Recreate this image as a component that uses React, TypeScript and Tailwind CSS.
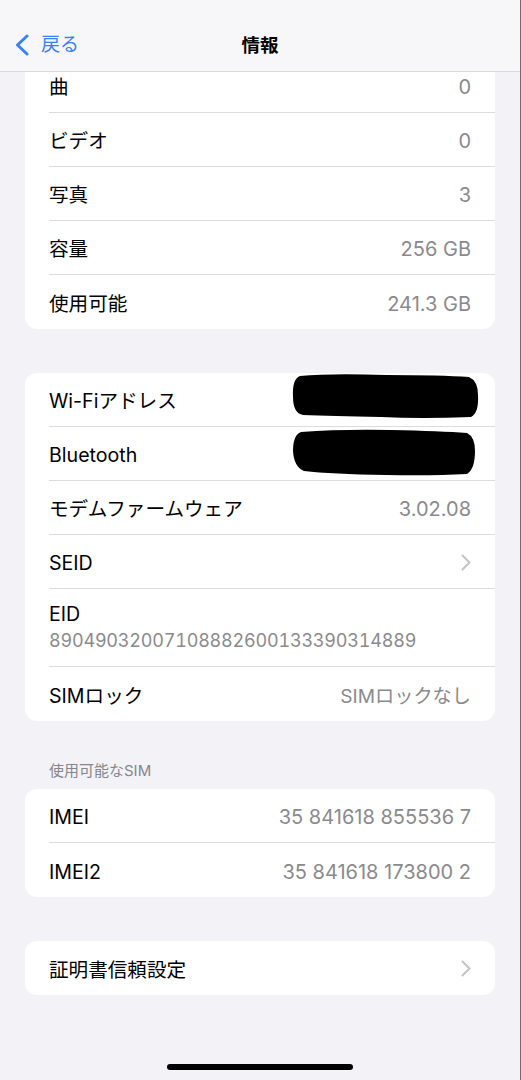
import React from "react";

const font = { fontFamily: '"Inter", "Noto Sans CJK JP", sans-serif' };

function Chevron() {
  return (
    <svg width="10" height="17" viewBox="0 0 10 17" fill="none">
      <path d="M1.5 1.5L8.5 8.5L1.5 15.5" stroke="#c4c4c7" strokeWidth="2" strokeLinecap="round" strokeLinejoin="round" />
    </svg>
  );
}

function Blob({ variant }: { variant: 1 | 2 }) {
  const d =
    variant === 1
      ? "M9 3 Q40 0 95 2 Q150 2 178 4 Q187 8 187 22 Q188 40 180 44 Q130 46 90 44 Q40 43 12 42 Q2 40 2 24 Q1 6 9 3 Z"
      : "M10 3 Q50 0 100 1 Q150 2 176 4 Q184 8 184 22 Q184 40 176 45 Q140 47 95 46 Q40 45 13 42 Q3 38 2 22 Q2 6 10 3 Z";
  return (
    <svg
      width="188"
      height="47"
      viewBox="0 0 188 47"
      className={variant === 1 ? "-mr-[8px] -mt-[6px]" : "-mr-[8px] -mt-[2px]"}
    >
      <path d={d} fill="#000" />
    </svg>
  );
}

function Row({
  label,
  value,
  chevron,
  last,
  children,
  small,
}: {
  label: string;
  value?: string;
  chevron?: boolean;
  last?: boolean;
  children?: React.ReactNode;
  small?: boolean;
}) {
  return (
    <div className="pl-[24px]">
      <div
        className={`flex h-[54px] items-center justify-between pr-[24px] ${
          last ? "" : "border-b border-[#dcdce0]"
        }`}
      >
        <span className="pt-[3px] text-[19.6px] leading-[24px] text-black">{label}</span>
        {children}
        {value !== undefined && (
          <span
            className={`pt-[3px] leading-[24px] text-[#8a8a8e] ${small ? "text-[19.2px]" : "text-[20px]"}`}
          >
            {value}
          </span>
        )}
        {chevron && (
          <span className="pt-[1px]">
            <Chevron />
          </span>
        )}
      </div>
    </div>
  );
}

function Card({ children, className = "" }: { children: React.ReactNode; className?: string }) {
  return (
    <div className={`mx-[25px] overflow-hidden rounded-[12px] bg-white ${className}`}>{children}</div>
  );
}

export default function App() {
  return (
    <div
      className="relative h-[1080px] w-[521px] overflow-hidden border-r border-[#6b6b70] bg-[#f2f2f7]"
      style={font}
    >
      {/* Navigation bar */}
      <div className="absolute left-0 right-0 top-0 z-10 flex h-[72px] items-end border-b border-[#dadadd] bg-[#f7f7f9] pb-[14px]">
        <div className="flex items-center pl-[14px]">
          <svg width="16" height="22" viewBox="0 0 16 22" fill="none">
            <path d="M13 2L3.5 11L13 20" stroke="#3a82f7" strokeWidth="3" strokeLinecap="round" strokeLinejoin="round" />
          </svg>
          <span className="ml-[11px] text-[19px] leading-[24px] text-[#3a82f7]">戻る</span>
        </div>
        <div className="absolute bottom-[14px] left-0 right-0 flex justify-center">
          <span className="text-[18.5px] font-semibold leading-[24px] text-black">情報</span>
        </div>
      </div>

      <div className="pt-[59px]">
        <Card className="rounded-t-none">
          <Row label="曲" value="0" />
          <Row label="ビデオ" value="0" />
          <Row label="写真" value="3" />
          <Row label="容量" value="256 GB" />
          <Row label="使用可能" value="241.3 GB" last />
        </Card>

        <Card className="mt-[44px]">
          <Row label="Wi-Fiアドレス">
            <Blob variant={1} />
          </Row>
          <Row label="Bluetooth">
            <Blob variant={2} />
          </Row>
          <Row label="モデムファームウェア" value="3.02.08" />
          <Row label="SEID" chevron />
          <div className="pl-[24px]">
            <div className="border-b border-[#dcdce0] pb-[12px] pt-[13px]">
              <div className="text-[19.6px] leading-[24px] text-black">EID</div>
              <div className="mt-[2px] text-[18px] leading-[26px] tracking-[-0.2px] text-[#8a8a8e] tabular-nums">
                89049032007108882600133390314889
              </div>
            </div>
          </div>
          <Row label="SIMロック" value="SIMロックなし" last small />
        </Card>

        <div className="mt-[40px] px-[49px] pb-[9px] text-[15px] leading-[19px] text-[#86868b]">
          使用可能なSIM
        </div>
        <Card>
          <Row label="IMEI" value="35 841618 855536 7" />
          <Row label="IMEI2" value="35 841618 173800 2" last />
        </Card>

        <Card className="mt-[44px]">
          <Row label="証明書信頼設定" chevron last />
        </Card>
      </div>

      {/* Home indicator */}
      <div className="absolute bottom-[10px] left-0 right-0 flex justify-center">
        <div className="h-[6px] w-[186px] rounded-full bg-black" />
      </div>
    </div>
  );
}
